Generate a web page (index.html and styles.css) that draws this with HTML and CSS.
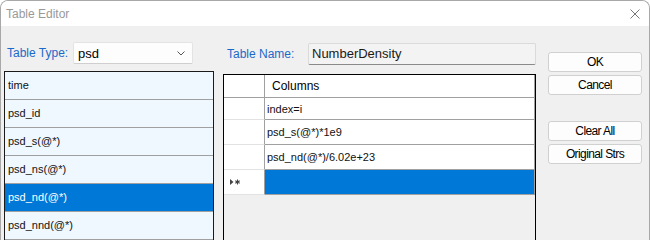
FILE: index.html
```html
<!DOCTYPE html>
<html lang="en">
<head>
    <meta charset="UTF-8">
    <title>Table Editor</title>
    <link rel="stylesheet" href="styles.css">
</head>
<body>
    <div class="window">
        <div class="titlebar">
            <span class="title">Table Editor</span>
            <svg class="close" width="10" height="10" viewBox="0 0 10 10">
                <path d="M0.5 0.5 L9.5 9.5 M9.5 0.5 L0.5 9.5" stroke="#777" stroke-width="1" fill="none"/>
            </svg>
        </div>

        <div class="client">
            <div class="col-left">
                <div class="field-row">
                    <label class="type-label">Table Type:</label>
                    <div class="select">
                        <span>psd</span>
                        <svg width="8" height="5" viewBox="0 0 8 5">
                            <path d="M0.5 0.5 L4 4 L7.5 0.5" stroke="#555" stroke-width="1" fill="none"/>
                        </svg>
                    </div>
                </div>
                <ul class="type-list">
                    <li>time</li>
                    <li>psd_id</li>
                    <li>psd_s(@*)</li>
                    <li>psd_ns(@*)</li>
                    <li class="selected">psd_nd(@*)</li>
                    <li>psd_nnd(@*)</li>
                </ul>
            </div>

            <div class="col-mid">
                <div class="field-row">
                    <label class="name-label">Table Name:</label>
                    <div class="name-input">NumberDensity</div>
                </div>
                <div class="grid">
                    <div class="grid-row grid-head">
                        <div class="row-head"></div>
                        <div class="cell">Columns</div>
                    </div>
                    <div class="grid-row first">
                        <div class="row-head"></div>
                        <div class="cell">index=i</div>
                    </div>
                    <div class="grid-row">
                        <div class="row-head"></div>
                        <div class="cell">psd_s(@*)*1e9</div>
                    </div>
                    <div class="grid-row">
                        <div class="row-head"></div>
                        <div class="cell">psd_nd(@*)/6.02e+23</div>
                    </div>
                    <div class="grid-row new-row">
                        <div class="row-head">
                            <svg width="11" height="6" viewBox="0 0 11 6">
                                <path d="M0 0 L3.5 3 L0 6 Z" fill="#444"/>
                                <path d="M7.5 0.5 V5.5 M5.3 1.7 L9.7 4.3 M9.7 1.7 L5.3 4.3" stroke="#444" stroke-width="1.1" fill="none"/>
                            </svg>
                        </div>
                        <div class="cell"></div>
                    </div>
                </div>
            </div>

            <div class="col-right">
                <button>OK</button>
                <button>Cancel</button>
                <button class="spaced">Clear All</button>
                <button>Original Strs</button>
            </div>
        </div>
    </div>
</body>
</html>
```

FILE: styles.css
```css
body {
    margin: 0;
    background-color: #fff;
    font-family: "Liberation Sans", Arial, sans-serif;
}
.window {
    width: 650px;
    height: 240px;
    box-sizing: border-box;
    border: 1px solid #a8a8a8;
    border-bottom: none;
    border-radius: 8px 8px 0 0;
    overflow: hidden;
    background-color: #f0f0f0;
}
.titlebar {
    height: 25px;
    background-color: #fff;
    display: flex;
    align-items: center;
    justify-content: space-between;
    padding: 0 9px 0 5px;
}
.title {
    font-size: 12px;
    color: #999;
}
.client {
    display: flex;
    padding: 16px 0 0 3px;
}
.field-row {
    display: flex;
    align-items: center;
    height: 22px;
}
.type-label, .name-label {
    font-size: 12px;
    color: #1b6ac9;
    box-sizing: border-box;
}
.col-left {
    width: 210px;
}
.type-label {
    width: 69px;
    padding-left: 3px;
}
.select {
    width: 120px;
    height: 22px;
    box-sizing: border-box;
    border: 1px solid #e3e3e3;
    border-bottom-color: #cfcfcf;
    border-radius: 2px;
    background-color: #fdfdfd;
    display: flex;
    align-items: center;
    justify-content: space-between;
    padding: 0 7px 0 4px;
    font-size: 13px;
    color: #000;
}
.type-list {
    list-style: none;
    margin: 7px 0 0 0;
    padding: 0;
    border: 1px solid #1a1a1a;
    border-bottom: none;
    background-color: #eff7ff;
    height: 200px;
}
.type-list li {
    height: 27px;
    line-height: 27px;
    border-bottom: 1px solid #a0a0a0;
    padding-left: 3px;
    font-size: 11px;
    color: #111;
}
.type-list li.selected {
    background-color: #0078d7;
    color: #fff;
}
.col-mid {
    width: 313px;
    margin-left: 9px;
    padding-top: 1px;
}
.name-label {
    width: 85px;
    padding-left: 4px;
}
.name-input {
    width: 228px;
    height: 22px;
    box-sizing: border-box;
    border: 1px solid #dadada;
    border-bottom-color: #8a8a8a;
    border-radius: 2px;
    background-color: #f3f3f3;
    padding-left: 3px;
    line-height: 20px;
    font-size: 13px;
    color: #1a1a1a;
}
.grid {
    margin-top: 9px;
    border: 1px solid #000;
    border-bottom: none;
    height: 170px;
    background-color: #f0f0f0;
}
.grid-row {
    display: flex;
    height: 25px;
}
.grid-head {
    height: 23px;
}
.grid-row.first {
    height: 22px;
}
.row-head {
    width: 40px;
    background-color: #fff;
    border-right: 1px solid #a0a0a0;
    border-bottom: 1px solid #e2e2e2;
    display: flex;
    align-items: center;
    padding-left: 6px;
    box-sizing: border-box;
    width: 41px;
}
.cell {
    flex: 1;
    background-color: #fff;
    border-right: 1px solid #a0a0a0;
    border-bottom: 1px solid #a0a0a0;
    padding-left: 2px;
    font-size: 11px;
    color: #111;
    display: flex;
    align-items: center;
}
.grid-head .cell {
    padding-left: 7px;
    font-size: 12px;
    color: #000;
}
.grid-head .row-head {
    border-bottom-color: #a0a0a0;
}
.new-row .cell {
    background-color: #0078d7;
}
.col-right {
    width: 94px;
    margin-left: 12px;
    padding-top: 10px;
    display: flex;
    flex-direction: column;
    gap: 3px;
}
button {
    height: 20px;
    box-sizing: border-box;
    border: 1px solid #d0d0d0;
    border-radius: 3px;
    background-color: #fdfdfd;
    font-family: "Liberation Sans", Arial, sans-serif;
    font-size: 12px;
    letter-spacing: -0.6px;
    color: #000;
    padding: 0;
}
button.spaced {
    margin-top: 23px;
}
```
